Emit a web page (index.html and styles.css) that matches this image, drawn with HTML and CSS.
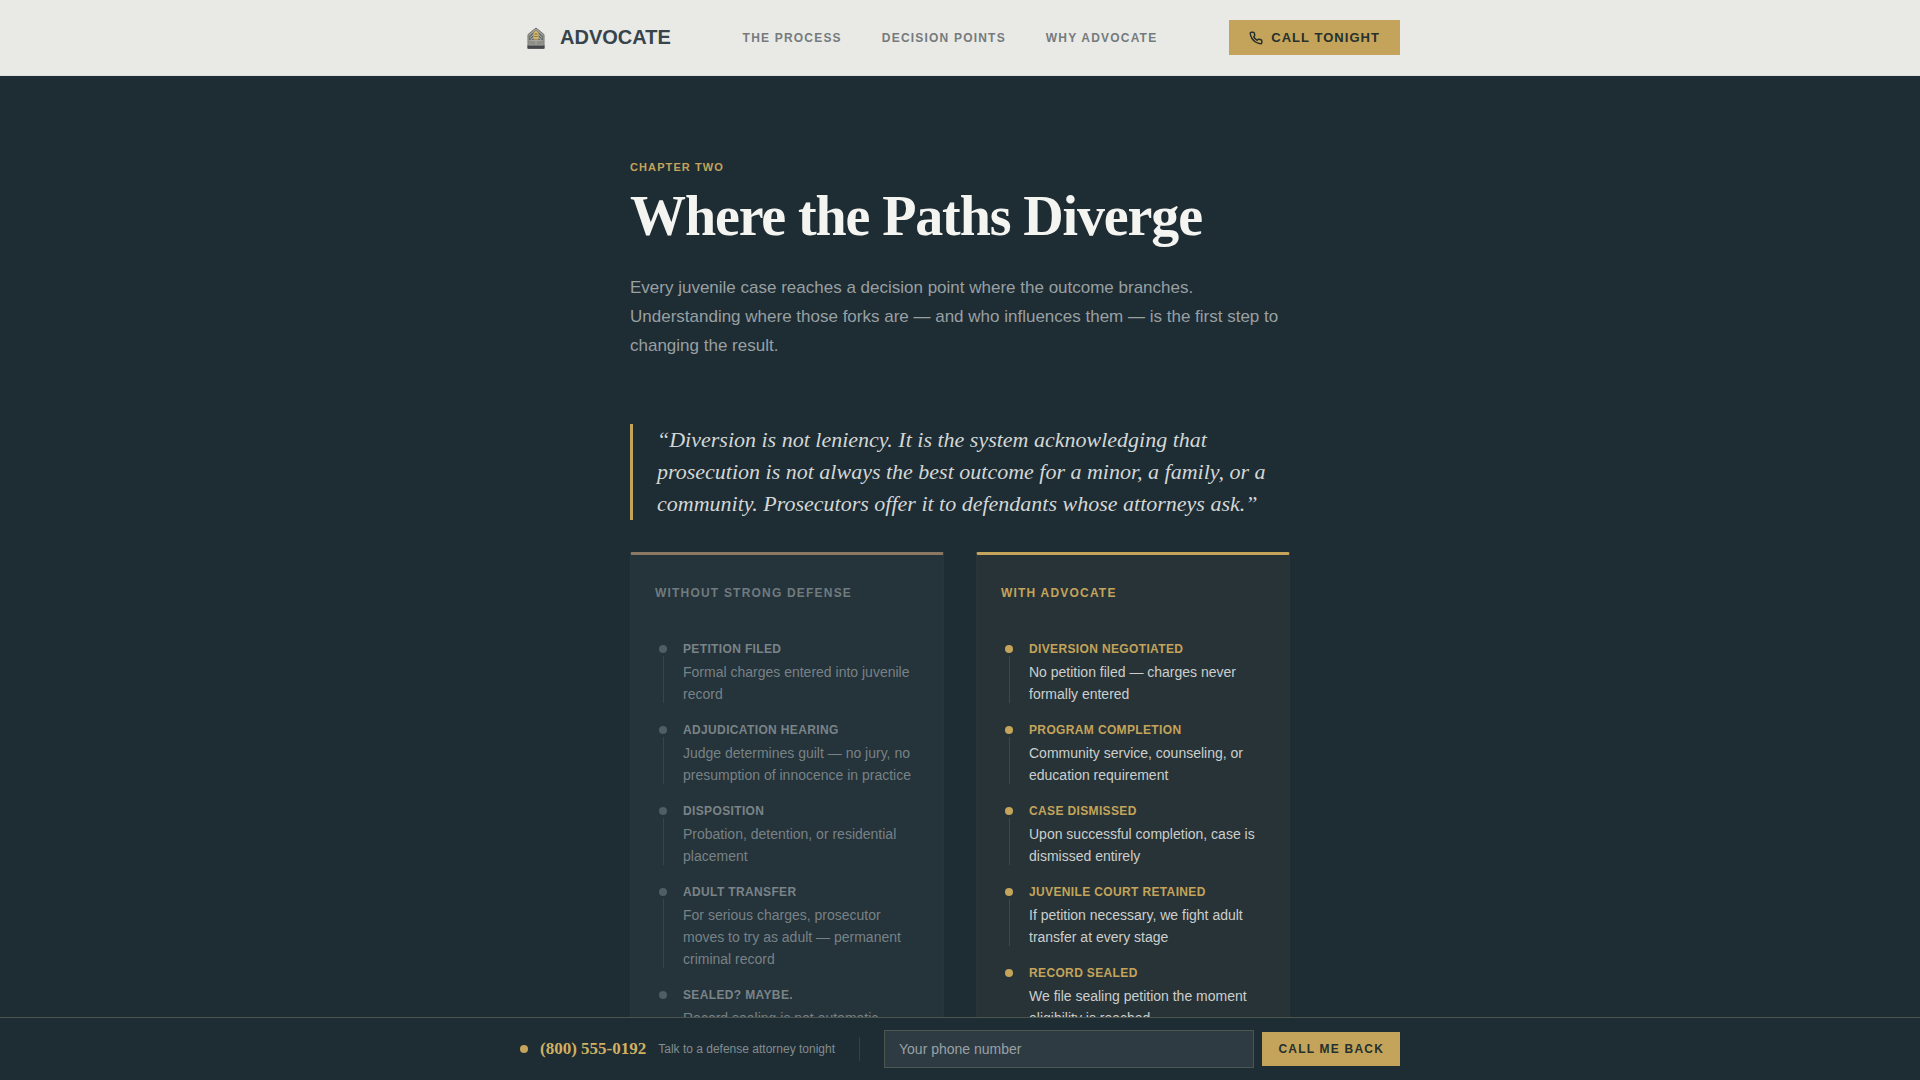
FILE: index.html
```html
<!DOCTYPE html>
<html lang="en">
<head>
  <meta charset="UTF-8">
  <title>Advocate</title>
  <meta name="viewport" content="width=device-width, initial-scale=1.0">
  <link rel="stylesheet" href="styles.css">
</head>
<body>

<header class="site-header">
  <div class="wrap header-inner">
    <a class="logo" href="#">
      <svg class="logo-mark" viewBox="0 0 32 32" aria-hidden="true">
        <path d="M16 6 L24 12.5 V26.5 H8 V12.5 Z" fill="#a9a79c" stroke="#6a6f6c" stroke-width="1"/>
        <path d="M16 8 L23 14 V18 H9 V14 Z" fill="#626a6c"/>
        <path d="M9.5 16 L14 12 M10.5 18 L14 15 M22.5 16 L18 12 M21.5 18 L18 15" stroke="#b9b9ae" stroke-width="1"/>
        <path d="M13.5 10.5 L16 8.5 L18.5 10.5 V17.5 H13.5 Z" fill="#d3b566"/>
        <path d="M14.5 12 H17.5 M14.5 14.5 H17.5" stroke="#8b7742" stroke-width="1"/>
        <path d="M9 18.5 L15.5 19.5 V23 L9 22.5 Z M23 18.5 L16.5 19.5 V23 L23 22.5 Z" fill="#8d8d89"/>
        <path d="M7.5 23.5 H24.5 V26.5 H7.5 Z" fill="#45474a"/>
      </svg>
      <span>ADVOCATE</span>
    </a>
    <nav class="nav">
      <a href="#process">The Process</a>
      <a href="#decisions">Decision Points</a>
      <a href="#why">Why Advocate</a>
    </nav>
    <button class="btn btn-call" type="button">
      <svg class="icon" viewBox="0 0 24 24" aria-hidden="true">
        <path d="M22 16.92v3a2 2 0 0 1-2.18 2 19.79 19.79 0 0 1-8.63-3.07 19.5 19.5 0 0 1-6-6 19.79 19.79 0 0 1-3.07-8.67A2 2 0 0 1 4.11 2h3a2 2 0 0 1 2 1.72 12.84 12.84 0 0 0 .7 2.81 2 2 0 0 1-.45 2.11L8.09 9.91a16 16 0 0 0 6 6l1.27-1.27a2 2 0 0 1 2.11-.45 12.84 12.84 0 0 0 2.81.7A2 2 0 0 1 22 16.92z"/>
      </svg>
      Call Tonight
    </button>
  </div>
</header>

<main class="chapter" id="decisions">
  <p class="eyebrow">Chapter Two</p>
  <h1>Where the Paths Diverge</h1>
  <p class="lead">Every juvenile case reaches a decision point where the outcome branches. Understanding where those forks are — and who influences them — is the first step to changing the result.</p>

  <blockquote>“Diversion is not leniency. It is the system acknowledging that prosecution is not always the best outcome for a minor, a family, or a community. Prosecutors offer it to defendants whose attorneys ask.”</blockquote>

  <div class="paths">
    <section class="path">
      <h2>Without Strong Defense</h2>
      <ol class="steps">
        <li>
          <h3>Petition Filed</h3>
          <p>Formal charges entered into juvenile record</p>
        </li>
        <li>
          <h3>Adjudication Hearing</h3>
          <p>Judge determines guilt — no jury, no presumption of innocence in practice</p>
        </li>
        <li>
          <h3>Disposition</h3>
          <p>Probation, detention, or residential placement</p>
        </li>
        <li>
          <h3>Adult Transfer</h3>
          <p>For serious charges, prosecutor moves to try as adult — permanent criminal record</p>
        </li>
        <li>
          <h3>Sealed? Maybe.</h3>
          <p>Record sealing is not automatic</p>
        </li>
      </ol>
    </section>

    <section class="path path-gold">
      <h2>With Advocate</h2>
      <ol class="steps">
        <li>
          <h3>Diversion Negotiated</h3>
          <p>No petition filed — charges never formally entered</p>
        </li>
        <li>
          <h3>Program Completion</h3>
          <p>Community service, counseling, or education requirement</p>
        </li>
        <li>
          <h3>Case Dismissed</h3>
          <p>Upon successful completion, case is dismissed entirely</p>
        </li>
        <li>
          <h3>Juvenile Court Retained</h3>
          <p>If petition necessary, we fight adult transfer at every stage</p>
        </li>
        <li>
          <h3>Record Sealed</h3>
          <p>We file sealing petition the moment eligibility is reached</p>
        </li>
      </ol>
    </section>
  </div>
</main>

<div class="call-bar">
  <form class="wrap call-inner">
    <div class="call-info">
      <span class="dot"></span>
      <a class="phone" href="tel:+18005550192">(800) 555-0192</a>
      <span class="note">Talk to a defense attorney tonight</span>
    </div>
    <span class="divider"></span>
    <div class="call-form">
      <input type="tel" aria-label="Your phone number" placeholder="Your phone number">
      <button class="btn btn-back" type="submit">Call Me Back</button>
    </div>
  </form>
</div>

</body>
</html>
```

FILE: styles.css
```css
:root {
  --navy: #1e2c34;
  --paper: #e9eae5;
  --gold: #c4a45a;
  --sans: "Liberation Sans", Arial, sans-serif;
  --serif: "Liberation Serif", "Times New Roman", serif;
}

* {
  box-sizing: border-box;
}

body {
  margin: 0;
  background: var(--navy);
  color: #f4f4f0;
  font-family: var(--sans);
}

h1, h2, h3, p, ol, blockquote {
  margin: 0;
  padding: 0;
}

a {
  text-decoration: none;
}

.wrap {
  max-width: 880px;
  margin: 0 auto;
}

/* header */

.site-header {
  position: sticky;
  top: 0;
  z-index: 10;
  padding: 20px 0;
  background: var(--paper);
  border-bottom: 1px solid #dde2dc;
}

.header-inner {
  display: flex;
  align-items: center;
  justify-content: space-between;
}

.logo {
  display: flex;
  align-items: center;
  gap: 8px;
  height: 35px;
  color: #36444c;
  font-size: 20px;
  font-weight: bold;
}

.logo-mark {
  width: 32px;
  height: 32px;
}

.nav {
  display: flex;
  gap: 40px;
}

.nav a {
  color: #757b7d;
  font-size: 12px;
  font-weight: bold;
  letter-spacing: 0.1em;
  text-transform: uppercase;
}

.btn {
  border: none;
  background: var(--gold);
  color: #25302f;
  font-family: var(--sans);
  font-weight: bold;
  text-transform: uppercase;
  cursor: pointer;
}

.btn-call {
  display: flex;
  align-items: center;
  gap: 8px;
  padding: 10px 20px;
  font-size: 13px;
  line-height: 15px;
  letter-spacing: 0.08em;
}

.icon {
  width: 14px;
  height: 14px;
  fill: none;
  stroke: currentColor;
  stroke-width: 2.5;
  stroke-linecap: round;
  stroke-linejoin: round;
}

/* chapter */

.chapter {
  max-width: 660px;
  margin: 0 auto;
  padding: 80px 0 144px;
}

.eyebrow {
  color: var(--gold);
  font-size: 11px;
  font-weight: bold;
  line-height: 22px;
  letter-spacing: 0.1em;
  text-transform: uppercase;
}

h1 {
  margin-top: 5px;
  color: #f4f4f0;
  font-family: var(--serif);
  font-size: 56px;
  line-height: 66px;
  letter-spacing: -0.02em;
}

.lead {
  margin: 24px 0 64px;
  color: #98a0a2;
  font-size: 17px;
  line-height: 29px;
}

blockquote {
  margin-bottom: 32px;
  padding-left: 24px;
  border-left: 3px solid var(--gold);
  color: #d3d7d5;
  font-family: var(--serif);
  font-size: 22px;
  font-style: italic;
  line-height: 32px;
}

.paths {
  display: grid;
  grid-template-columns: 1fr 1fr;
  gap: 32px;
}

.path {
  padding: 24px;
  border: 1px solid #27353c;
  border-top: 3px solid #8a7862;
  border-radius: 2px;
  background: #25333a;
}

.path h2 {
  margin-bottom: 29px;
  color: #707b80;
  font-size: 12px;
  line-height: 28px;
  letter-spacing: 0.1em;
  text-transform: uppercase;
}

.steps {
  list-style: none;
}

.steps li {
  position: relative;
  padding: 4px 0 12px 28px;
}

.steps li::before {
  content: "";
  position: absolute;
  left: 4px;
  top: 9px;
  width: 8px;
  height: 8px;
  border-radius: 50%;
  background: #4f5d64;
}

.steps li:not(:last-child)::after {
  content: "";
  position: absolute;
  left: 8px;
  top: 20px;
  bottom: 14px;
  width: 1px;
  background: #36444b;
}

.steps h3 {
  margin-bottom: 2px;
  color: #7a8488;
  font-size: 12px;
  line-height: 19px;
  letter-spacing: 0.03em;
  text-transform: uppercase;
}

.steps p {
  color: #788286;
  font-size: 14px;
  line-height: 22px;
}

.path-gold {
  border-color: #293538;
  border-top-color: var(--gold);
  background: #283337;
}

.path-gold h2,
.path-gold h3 {
  color: var(--gold);
}

.path-gold li::before {
  background: var(--gold);
}

.path-gold li:not(:last-child)::after {
  background: #45483d;
}

.path-gold p {
  color: #cbcfcd;
}

/* bottom bar */

.call-bar {
  position: fixed;
  left: 0;
  right: 0;
  bottom: 0;
  z-index: 10;
  padding: 12px 0;
  border-top: 1px solid #4d554e;
  background: var(--navy);
}

.call-inner {
  display: flex;
  align-items: center;
  gap: 24px;
}

.call-info {
  display: flex;
  align-items: center;
  gap: 12px;
}

.dot {
  width: 8px;
  height: 8px;
  border-radius: 50%;
  background: var(--gold);
}

.phone {
  color: #d0b060;
  font-family: var(--serif);
  font-size: 17px;
  font-weight: bold;
}

.note {
  color: #828c8f;
  font-size: 12px;
}

.divider {
  width: 1px;
  height: 24px;
  background: #334047;
}

.call-form {
  display: flex;
  flex: 1;
  align-items: center;
  gap: 8px;
}

.call-form input {
  flex: 1;
  min-width: 0;
  height: 38px;
  padding: 0 14px;
  border: 1px solid #4d574f;
  border-radius: 0;
  background: #2e3b43;
  color: #f4f4f0;
  font-family: var(--sans);
  font-size: 14px;
}

.call-form input::placeholder {
  color: #98a1a6;
}

.btn-back {
  padding: 10px 16px;
  font-size: 12px;
  line-height: 14px;
  letter-spacing: 0.1em;
}
```
